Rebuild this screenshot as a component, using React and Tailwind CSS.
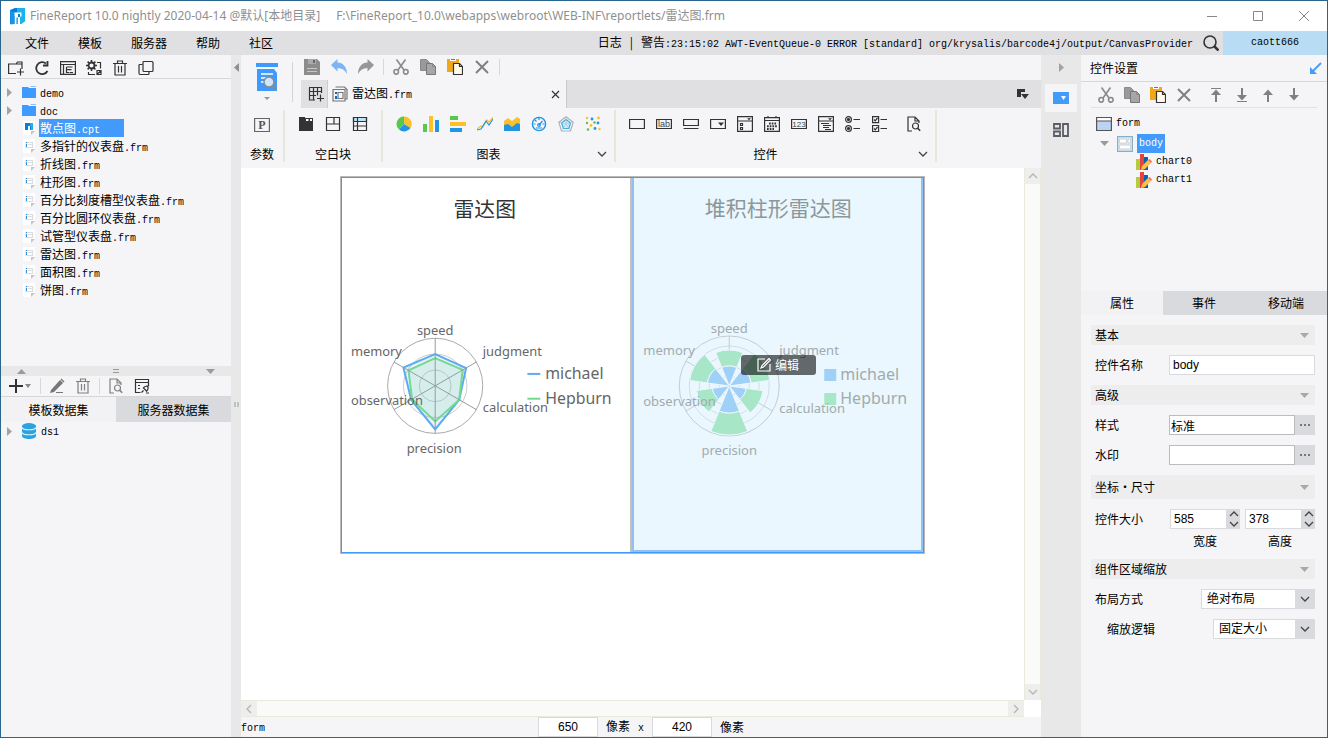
import React, { useState } from "react";

const MONO = "font-[family-name:'Liberation_Mono','Noto_Sans_CJK_SC',monospace] text-[10px]";

const Svg = ({ size = 16, box = 16, children, ...rest }) => (
  <svg
    width={size}
    height={size}
    viewBox={`0 0 ${box} ${box}`}
    fill="none"
    stroke="#333"
    strokeWidth="1.2"
    className="shrink-0"
    aria-hidden="true"
    {...rest}
  >
    {children}
  </svg>
);

const Down = ({ color = "#9a9a9a" }) => (
  <svg width="9" height="5" viewBox="0 0 9 5" className="shrink-0" aria-hidden="true">
    <path d="M0 0h9L4.5 5z" fill={color} />
  </svg>
);

const Up = () => (
  <svg width="9" height="5" viewBox="0 0 9 5" aria-hidden="true">
    <path d="M0 5h9L4.5 0z" fill="#9a9a9a" />
  </svg>
);

const Right = () => (
  <svg width="5" height="9" viewBox="0 0 5 9" className="shrink-0" aria-hidden="true">
    <path d="M0 0v9l5-4.5z" fill="#a2a2a2" />
  </svg>
);

const Left = () => (
  <svg width="5" height="9" viewBox="0 0 5 9" aria-hidden="true">
    <path d="M5 0v9L0 4.5z" fill="#8f8f8f" />
  </svg>
);

const Chevron = ({ dir = "down", color = "#444" }) => {
  const paths = {
    down: "M1 3l4 4 4-4",
    up: "M1 7l4-4 4 4",
    left: "M7 1L3 5l4 4",
    right: "M3 1l4 4-4 4",
  };
  return (
    <svg width="10" height="10" viewBox="0 0 10 10" fill="none" stroke={color} strokeWidth="1.3" aria-hidden="true">
      <path d={paths[dir]} />
    </svg>
  );
};

const Logo = () => (
  <Svg size={17} box={17} stroke="none">
    <path d="M1 2l5-2h10v13l-4 3H1z" fill="#0a7ed6" />
    <path d="M8 0h8v13l-4 3H8z" fill="#18b4ea" />
    <path d="M4.500 4.500h8v4h-1.500v7.500H9V9.500H7.500V16H5.500V8l-1-1z" fill="#fff" />
    <path d="M9 6h2v3H9z" fill="#0a7ed6" />
    <path d="M1 2l4.500 2.500V16l-4 .5z" fill="#1296ea" />
  </Svg>
);

const Cut = () => (
  <Svg stroke="#8a8a8a" strokeWidth="1.6">
    <path d="M3.5 0.5L11 11M12.5 0.5L5 11" />
    <circle cx="3.2" cy="12.8" r="2.3" />
    <circle cx="12.8" cy="12.8" r="2.3" />
  </Svg>
);

const Copy = () => (
  <Svg stroke="#8a8a8a" strokeWidth="1">
    <path d="M.5.5h6l3 3v8h-9z" fill="#999" />
    <path d="M6.500 4.500h6l3 3v8h-9z" fill="#a6a6a6" stroke="#777" />
    <path d="M12.500 4.500v3h3" />
  </Svg>
);

const Paste = () => (
  <Svg stroke="none">
    <path d="M0 0h12v13H0z" fill="#f0a818" />
    <path d="M3 0h6v2H3z" fill="#fff" />
    <path d="M4 0h4v1H4z" fill="#c55a1e" />
    <path d="M6.500 4.500h6l3 3v8h-9z" fill="#fffbe8" stroke="#333" />
    <path d="M12.500 4.500v3h3" fill="none" stroke="#333" />
  </Svg>
);

const Cross = () => (
  <Svg stroke="#808080" strokeWidth="2">
    <path d="M2 2l12 12M14 2L2 14" />
  </Svg>
);

const Save = () => (
  <Svg stroke="none">
    <path d="M0 0h13l3 3v13H0z" fill="#8c8c8c" />
    <path d="M4 0h8v5H4z" fill="#aaa" />
    <path d="M9 1h2v3H9z" fill="#666" />
    <path d="M3 9h10v1H3zM3 12h10v1H3z" fill="#c8c8c8" />
  </Svg>
);

const Undo = () => (
  <Svg stroke="none">
    <path d="M0 6l6.500-6v3.500C12 3.500 16 8 16 15c-2-4-5-6-9.500-6v3.500z" fill="#7cb5f2" />
  </Svg>
);

const Redo = () => (
  <Svg stroke="none">
    <path d="M16 6L9.500 0v3.500C4 3.500 0 8 0 15c2-4 5-6 9.500-6v3.500z" fill="#979797" />
  </Svg>
);

const Trash = ({ color = "#333" }) => (
  <Svg stroke={color}>
    <path d="M1 3.500h14M5.500 3V1h5v2M3 3.500V15h10V3.500M6.500 6v6.500M9.500 6v6.500" />
  </Svg>
);

const Find = ({ color = "#333" }) => (
  <Svg stroke={color}>
    <path d="M6 15H2V1h7l4 4v2M9 1v4h4" />
    <circle cx="9.500" cy="10" r="3" />
    <path d="M11.700 12.200l2.500 2.500" strokeWidth="1.600" />
  </Svg>
);

const Folder = () => (
  <Svg size={14} box={14} stroke="none">
    <path d="M0 2h6l1 1h7v10H0z" fill="#3f9aff" />
    <path d="M8 1h6v1H9z" fill="#8cc3ff" />
  </Svg>
);

const FrmIcon = () => (
  <Svg size={14} box={14} stroke="none">
    <path d="M1 0h12v10l-4 4H1z" fill="#fff" />
    <path d="M13 10l-4 4v-4z" fill="#c4c4c4" />
    <path d="M4 3.500h6.500v5H4zM6 5.500h4" stroke="#dcdcdc" />
    <path d="M4 3h1v1H4zM4 5h1v3H4z" fill="#2d8fd6" />
  </Svg>
);

const CptIcon = () => (
  <Svg size={14} box={14} stroke="none">
    <path d="M1 0h12v10l-4 4H1z" fill="#fff" />
    <path d="M13 10l-4 4v-4z" fill="#c4c4c4" />
    <path d="M3 2h8v7H8V5H6v4H3z" fill="#0a7ed6" />
    <path d="M8 2h3v7H9V5H8z" fill="#18b4ea" />
  </Svg>
);

const Database = () => (
  <Svg stroke="none">
    <path d="M1 3v10c0 4 14 4 14 0V3z" fill="#2ba3e0" />
    <ellipse cx="8" cy="3" rx="7" ry="3" fill="#2ba3e0" />
    <path d="M1 4.500c1 3 13 3 14 0M1 9.500c1 3 13 3 14 0" fill="none" stroke="#d8effb" />
  </Svg>
);

const ChartItemIcon = () => (
  <Svg stroke="none">
    <path d="M0 5h4v11H0z" fill="#b4cc3f" />
    <path d="M4 0h4v16H4z" fill="#e8423c" />
    <path d="M8 3h4v13H8z" fill="#0b62a8" />
    <path d="M5 16l1-4 6-6 3 3-6 6z" fill="#fbc04c" />
    <path d="M12 6l1.500-1L16 7.500 15 9z" fill="#f07050" />
  </Svg>
);

const Bar = ({ beige }) => <span className={`h-4 w-px shrink-0 ${beige ? "bg-[#e4dfd0]" : "bg-[#d8d8da]"}`} />;

const IconButton = ({ label, children }) => (
  <button type="button" aria-label={label} className="flex h-5 w-4 shrink-0 items-center justify-center">
    {children}
  </button>
);

const fileTools = [
  {
    name: "新建文件夹",
    icon: (
      <Svg>
        <path d="M8 13.500H.6V4H8l1.500-2H14v7M8 4h6M12.500 8.500v7M9 12h7" />
      </Svg>
    ),
  },
  {
    name: "刷新",
    icon: (
      <Svg strokeWidth="1.800">
        <path d="M13.500 11A6 6 0 1 1 12 3.500" />
        <path d="M9 5.500h4.500V1" />
      </Svg>
    ),
  },
  {
    name: "打开",
    icon: (
      <Svg>
        <path d="M.6 1.600h14.800v12.800H.6zM.6 4.500h14.800M3.500 4.500v10M6.500 7h6M6.500 7v5.500h3M6.500 9.700h5M10 12.500h3" />
      </Svg>
    ),
  },
  {
    name: "设置",
    icon: (
      <Svg>
        <circle cx="5.500" cy="5.500" r="3" strokeWidth="1.800" />
        <path d="M5.500 0v2M5.500 9v2M0 5.500h2M9 5.500h2M1.600 1.600L3 3M8 8l1.400 1.400M1.600 9.400L3 8M8 3l1.400-1.400" strokeWidth="1.600" />
        <path d="M11 2.500h3.500v6M2.500 12v2.500H9M11 10.500h4v4h-4zM11 14.500l4-4" />
      </Svg>
    ),
  },
  { name: "删除", icon: <Trash /> },
  {
    name: "复制",
    icon: (
      <Svg>
        <rect x="5" y="1.500" width="10" height="10" rx="1" />
        <path d="M4.500 4.500H2q-1 0-1 1V13q0 1.500 1 1.500h8q1 0 1-1V12" />
      </Svg>
    ),
  },
];

const files = [
  ["demo", "", "folder"],
  ["doc", "", "folder"],
  ["散点图", ".cpt", "cpt"],
  ["多指针的仪表盘", ".frm", "frm"],
  ["折线图", ".frm", "frm"],
  ["柱形图", ".frm", "frm"],
  ["百分比刻度槽型仪表盘", ".frm", "frm"],
  ["百分比圆环仪表盘", ".frm", "frm"],
  ["试管型仪表盘", ".frm", "frm"],
  ["雷达图", ".frm", "frm"],
  ["面积图", ".frm", "frm"],
  ["饼图", ".frm", "frm"],
];

const blockIcons = [
  {
    name: "Tab块",
    icon: (
      <Svg stroke="none">
        <path d="M1 1h6v1h8v13H1z" fill="#333" />
        <path d="M7.500 2.500H11v3H7.500zM11.500 2.500h3v3h-3z" fill="#fff" stroke="#333" strokeWidth="1" />
      </Svg>
    ),
  },
  {
    name: "绝对画布块",
    icon: (
      <Svg>
        <path d="M1.500 1.500h13v13h-13zM1.500 8h13M9 1.500V8" />
      </Svg>
    ),
  },
  {
    name: "报表块",
    icon: (
      <Svg>
        <path d="M1.500 1.500h13v4h-13z" fill="#bfe6f7" />
        <path d="M1.500 1.500h13v13h-13zM1.500 5.500h13M1.500 10h13M5.500 1.500v13" />
      </Svg>
    ),
  },
];

const chartIcons = [
  {
    name: "饼图",
    icon: (
      <Svg stroke="none">
        <path d="M8 8V.5A7.500 7.500 0 0 1 14.500 12z" fill="#fbc02d" />
        <path d="M8 8l6.500 4A7.500 7.500 0 0 1 3 13.500z" fill="#1f95e4" />
        <path d="M8 8l-5 5.500A7.500 7.500 0 0 1 8 .5z" fill="#56c84e" />
      </Svg>
    ),
  },
  {
    name: "柱形图",
    icon: (
      <Svg stroke="none">
        <path d="M0 8h4v8H0z" fill="#56c84e" />
        <path d="M6 0h4v16H6z" fill="#fbc02d" />
        <path d="M12 4h4v12h-4z" fill="#1f95e4" />
      </Svg>
    ),
  },
  {
    name: "条形图",
    icon: (
      <Svg stroke="none">
        <path d="M0 0h8v4H0z" fill="#56c84e" />
        <path d="M0 6h16v4H0z" fill="#fbc02d" />
        <path d="M0 12h12v4H0z" fill="#1f95e4" />
      </Svg>
    ),
  },
  {
    name: "折线图",
    icon: (
      <Svg>
        <path d="M0 13l4-3 2 1 4-7 2 2 4-5" stroke="#fbc02d" />
        <path d="M0 14l4-1 5-8 3 4 4-6" stroke="#1f95e4" />
      </Svg>
    ),
  },
  {
    name: "面积图",
    icon: (
      <Svg stroke="none">
        <path d="M0 5l4-3 4 3 5-4 3 2v9H0z" fill="#fbc02d" />
        <path d="M0 9l4-1 4 3 5-4 3 1v7H0z" fill="#1f95e4" />
      </Svg>
    ),
  },
  {
    name: "仪表盘",
    icon: (
      <Svg stroke="#1f95e4">
        <circle cx="8" cy="8" r="6.600" strokeWidth="1.400" />
        <path d="M8 9l3.500-4M8 2v2M2.500 8h2M11.500 8h2M4 4l1.500 1.500M5 12h6" />
        <circle cx="8" cy="9" r="1.300" />
      </Svg>
    ),
  },
  {
    name: "雷达图",
    icon: (
      <Svg stroke="#a9b4bb">
        <path d="M8 .8l7.200 5.400-2.700 8.800H3.500L.8 6.200z" />
        <path d="M8 3.500l4.500 3.500-1.600 5.500H5.500L3.500 7z" fill="#c9ecfb" stroke="#37aee6" />
        <path d="M8 8V1M8 8l7-2M8 8l4 6M8 8l-4 6M8 8L1 6" strokeWidth=".5" />
      </Svg>
    ),
  },
  {
    name: "散点图",
    icon: (
      <Svg stroke="none">
        <g fill="#1f95e4">
          <circle cx="7" cy="3" r="1.400" />
          <circle cx="13" cy="7" r="1.400" />
          <circle cx="10" cy="12.500" r="1.400" />
        </g>
        <g fill="#fbc02d">
          <circle cx="2" cy="2" r="1.300" />
          <circle cx="13.500" cy="2" r="1.400" />
          <circle cx="6" cy="9.500" r="1.400" />
          <circle cx="14.500" cy="13" r="1.200" />
        </g>
        <g fill="#56c84e">
          <circle cx="9.500" cy="6.500" r="1.300" />
          <circle cx="2" cy="7" r="1.200" />
          <circle cx="3" cy="13.500" r="1.300" />
        </g>
      </Svg>
    ),
  },
];

const svgWord = { fill: "#444", stroke: "none", fontSize: 9, textAnchor: "middle", fontFamily: "Liberation Sans, sans-serif" };

const widgetIcons = [
  { name: "文本", icon: <Svg><path d="M.6 3.500h14.800v9H.6z" /></Svg> },
  {
    name: "标签",
    icon: (
      <Svg>
        <path d="M.6 3.500h14.800v9H.6z" />
        <text x="8" y="11" {...svgWord}>lab</text>
      </Svg>
    ),
  },
  { name: "按钮", icon: <Svg><path d="M.6 3.500h14.800v6H.6zM.6 12.500h14.800" /></Svg> },
  {
    name: "下拉框",
    icon: (
      <Svg>
        <path d="M.6 3.500h14.800v9H.6z" />
        <path d="M8 6.500h6L11 10z" fill="#333" stroke="none" />
      </Svg>
    ),
  },
  {
    name: "下拉复选框",
    icon: (
      <Svg>
        <path d="M.6.6h14.800v14.800H.6zM.6 5h14.800M3.500 7.500h2v2h-2zM3.500 11.500h2v2h-2z" />
        <path d="M10 2.200h4l-2 2z" fill="#333" stroke="none" />
      </Svg>
    ),
  },
  {
    name: "日期",
    icon: (
      <Svg>
        <path d="M.6 1.600h14.800v13.800H.6zM.6 4.500h14.800M4 0v2M12 0v2" />
        <path d="M5 7.500h8M3 10.300h10M3 13h7" strokeWidth="2" strokeDasharray="1.700 1" />
      </Svg>
    ),
  },
  {
    name: "数字",
    icon: (
      <Svg>
        <path d="M.6 3.500h14.800v9H.6z" />
        <text x="8" y="11" {...svgWord} fontSize={8}>123</text>
      </Svg>
    ),
  },
  {
    name: "下拉树",
    icon: (
      <Svg>
        <path d="M.6.6h14.800v14.800H.6zM.6 5h14.800M3 7.500h8M5 9.500h8M5 11.500h6M7 13.500h6" />
        <path d="M10 2.200h4l-2 2z" fill="#333" stroke="none" />
      </Svg>
    ),
  },
  {
    name: "单选按钮组",
    icon: (
      <Svg>
        <circle cx="3.500" cy="3.500" r="2.900" />
        <circle cx="3.500" cy="12.500" r="2.900" />
        <circle cx="3.500" cy="3.500" r="1" fill="#333" />
        <circle cx="3.500" cy="12.500" r="1" fill="#333" />
        <path d="M8.500 3.500H15M8.500 12.500H15" />
      </Svg>
    ),
  },
  {
    name: "复选按钮组",
    icon: (
      <Svg>
        <path d="M.6.6h6v6h-6zM.6 9.500h6v6h-6zM2 3.500l1.200 1.300L5.500 2M2 12.500l1.200 1.300L5.500 11M8.500 3.500H15M8.500 12.500H15" />
      </Svg>
    ),
  },
];

// point on a circle, angle measured clockwise from the top
const polar = (cx, cy, r, deg) => {
  const a = (deg * Math.PI) / 180;
  return [cx + r * Math.sin(a), cy - r * Math.cos(a)];
};

const Spokes = ({ cx, cy, r, color }) =>
  [0, 60, 120, 180, 240, 300].map((deg) => {
    const [x, y] = polar(cx, cy, r, deg);
    return <path key={deg} d={`M${cx} ${cy}L${x} ${y}`} stroke={color} />;
  });

const series = [
  { name: "michael", color: "#5cabf0", values: [32, 36, 28, 44, 28, 37] },
  { name: "Hepburn", color: "#73d98f", values: [28, 32, 28, 36, 27, 31] },
];

const CHART_FONT = "font-[family-name:'Noto_Sans','Noto_Sans_CJK_SC',sans-serif]";

function RadarChart() {
  const cx = 94;
  const cy = 208;
  return (
    <svg viewBox="0 0 290 374" className={`h-full w-full ${CHART_FONT}`} fill="none" role="img" aria-label="雷达图">
      <text x="144" y="38" fontSize="21" textAnchor="middle" fill="#333">雷达图</text>
      {[16, 32, 48].map((r) => (
        <circle key={r} cx={cx} cy={cy} r={r} stroke={r === 48 ? "#a8a8a8" : "#cacaca"} />
      ))}
      {series.map((s) => (
        <polygon
          key={s.name}
          points={s.values.map((v, i) => polar(cx, cy, v, i * 60).join(",")).join(" ")}
          fill={s.color}
          fillOpacity=".15"
          stroke={s.color}
          strokeWidth="2"
        />
      ))}
      <Spokes cx={cx} cy={cy} r={48} color="#8f9d9c" />
      <g fill="#666" fontSize="13">
        <text x="94" y="157" textAnchor="middle">speed</text>
        <text x="9" y="178">memory</text>
        <text x="142" y="178">judgment</text>
        <text x="9" y="227">observation</text>
        <text x="142" y="234">calculation</text>
        <text x="93" y="276" textAnchor="middle">precision</text>
      </g>
      <path d="M187 196h13" stroke="#5cabf0" strokeWidth="2" />
      <path d="M187 221h13" stroke="#73d98f" strokeWidth="2" />
      <g fill="#666" fontSize="16">
        <text x="205" y="201">michael</text>
        <text x="205" y="226">Hepburn</text>
      </g>
    </svg>
  );
}

const wedges = [
  [20, 36],
  [22, 41],
  [17, 34],
  [27, 49],
  [17, 33],
  [22, 40],
];

function StackedRadarChart() {
  const cx = 95;
  const cy = 208;
  const wedge = (r1, r2, deg) => {
    const a = polar(cx, cy, r1, deg - 22);
    const b = polar(cx, cy, r2, deg - 22);
    const c = polar(cx, cy, r2, deg + 22);
    const d = polar(cx, cy, r1, deg + 22);
    return `M${a}L${b}A${r2} ${r2} 0 0 1 ${c}L${d}A${r1} ${r1} 0 0 0 ${a}z`;
  };
  return (
    <svg viewBox="0 0 287 372" className={`h-full w-full ${CHART_FONT}`} fill="none" role="img" aria-label="堆积柱形雷达图">
      <text x="144" y="38" fontSize="21" textAnchor="middle" fill="#8c979b">堆积柱形雷达图</text>
      {[10, 20, 30, 40, 50].map((r) => (
        <circle key={r} cx={cx} cy={cy} r={r} stroke={r === 50 ? "#c3cdd2" : "#d3dee3"} />
      ))}
      <Spokes cx={cx} cy={cy} r={50} color="#c3cdd2" />
      {wedges.map(([inner, outer], i) => (
        <g key={i} stroke="#ebf7fe">
          <path d={wedge(inner, outer, i * 60)} fill="#a8e6c8" />
          <path d={wedge(1, inner, i * 60)} fill="#9fd0f7" />
        </g>
      ))}
      <path d="M190 191h12v12h-12z" fill="#9fd0f7" />
      <path d="M190 215h12v12h-12z" fill="#a8e6c8" />
      <g fill="#a0abaf" fontSize="13">
        <text x="95" y="155" textAnchor="middle">speed</text>
        <text x="9" y="177">memory</text>
        <text x="145" y="177">judgment</text>
        <text x="9" y="228">observation</text>
        <text x="145" y="235">calculation</text>
        <text x="95" y="277" textAnchor="middle">precision</text>
      </g>
      <g fill="#a0abaf" fontSize="16">
        <text x="206" y="202">michael</text>
        <text x="206" y="226">Hepburn</text>
      </g>
    </svg>
  );
}

function TitleBar() {
  return (
    <header className="flex h-[30px] shrink-0 items-center bg-white pr-1 pl-2 text-[12px] text-[#8f8f8f] font-[family-name:'Noto_Sans','Noto_Sans_CJK_SC',sans-serif]">
      <Logo />
      <h1 className="ml-1 whitespace-pre">FineReport 10.0 nightly 2020-04-14 @默认[本地目录]</h1>
      <span className="ml-4 whitespace-pre">F:\FineReport_10.0\webapps\webroot\WEB-INF\reportlets/雷达图.frm</span>
      <div className="ml-auto flex items-center gap-9 pr-[14px]">
        <button type="button" aria-label="最小化">
          <Svg size={10} box={10} stroke="#888" strokeWidth="1"><path d="M0 5.500h10" /></Svg>
        </button>
        <button type="button" aria-label="最大化">
          <Svg size={10} box={10} stroke="#888" strokeWidth="1"><path d="M.5.5h9v9h-9z" /></Svg>
        </button>
        <button type="button" aria-label="关闭">
          <Svg size={10} box={10} stroke="#888" strokeWidth="1"><path d="M0 0l10 10M10 0L0 10" /></Svg>
        </button>
      </div>
    </header>
  );
}

function MenuBar() {
  return (
    <nav className="flex h-6 shrink-0 items-center bg-[#e0e0e2]">
      <div className="flex gap-[29px] pl-6">
        {["文件", "模板", "服务器", "帮助", "社区"].map((item) => (
          <button type="button" key={item}>{item}</button>
        ))}
      </div>
      <div className="ml-auto flex items-baseline whitespace-pre">
        <button type="button">日志</button>
        <span className="mx-2">|</span>
        <span>警告</span>
        <span className={MONO}>:23:15:02 AWT-EventQueue-0 ERROR [standard] org/krysalis/barcode4j/output/CanvasProvider</span>
      </div>
      <button type="button" aria-label="搜索" className="mr-1 ml-[10px]">
        <Svg strokeWidth="1.600">
          <circle cx="7" cy="7" r="6" />
          <path d="M11 11l4.500 4.500" strokeWidth="2.500" />
        </Svg>
      </button>
      <button type="button" className={`h-6 w-[104px] bg-[#b8dcf3] ${MONO}`}>caott666</button>
    </nav>
  );
}

function FilePanel() {
  const [selected, setSelected] = useState("散点图");
  return (
    <aside className="flex w-[230px] shrink-0 flex-col">
      <div className="flex h-6 shrink-0 items-center gap-[10px] border-b border-[#d6d6d8] pt-[3px] pl-[7px]">
        {fileTools.map((tool) => (
          <IconButton key={tool.name} label={tool.name}>{tool.icon}</IconButton>
        ))}
      </div>
      <ul className="flex-1 overflow-hidden pt-1">
        {files.map(([base, ext, type]) => (
          <li key={base} className="flex h-[18px] items-center pl-[6px]">
            <span className="w-[15px]">{type === "folder" && <Right />}</span>
            {type === "folder" ? <Folder /> : type === "cpt" ? <CptIcon /> : <FrmIcon />}
            <button
              type="button"
              onClick={() => setSelected(base)}
              className={`ml-[3px] h-[18px] pl-px leading-[18px] ${
                selected === base ? "bg-[#429bfb] pr-6 text-white" : ""
              }`}
            >
              <span className={type === "folder" ? MONO : ""}>{base}</span>
              <span className={MONO}>{ext}</span>
            </button>
          </li>
        ))}
      </ul>

      <div className="flex h-[10px] shrink-0 items-center justify-between bg-[#e8e8e8] px-4">
        <Up />
        <Svg size={6} box={6} stroke="#999" strokeWidth="1"><path d="M0 1.500h6M0 4.500h6" /></Svg>
        <Down />
      </div>
      <div className="flex h-[21px] shrink-0 items-center border-b border-[#d6d6d8] pl-2">
        <button type="button" aria-label="添加" className="flex items-center gap-[2px]">
          <Svg size={14} box={14} strokeWidth="2"><path d="M0 7h14M7 0v14" /></Svg>
          <svg width="6" height="4" viewBox="0 0 6 4" aria-hidden="true"><path d="M0 0h6L3 4z" fill="#888" /></svg>
        </button>
        <span className="mr-2 ml-[9px] flex"><Bar /></span>
        <IconButton label="编辑">
          <Svg stroke="none">
            <path d="M2 12L11 2l3 3L5 14l-4 1z" fill="#777" />
            <path d="M11.500 1.500l1-1 3 3-1 1zM7 14h7v1H7z" fill="#777" />
          </Svg>
        </IconButton>
        <button type="button" aria-label="删除" className="mr-2 ml-[10px]"><Trash color="#808080" /></button>
        <Bar />
        <button type="button" aria-label="预览" className="mr-[10px] ml-2"><Find color="#808080" /></button>
        <IconButton label="连接">
          <Svg>
            <path d="M6.500 14.500h-5v-13h13V7M1.500 4.500h13M4 7.500h2M4 10.500h2" />
            <path d="M7.500 14.500l2-2M13 9l2-2M9 9.500l4 4M9.500 10.500c1-3 4-2.500 4.500-1.500s-.5 4-2 4.500M12 15h3" />
          </Svg>
        </IconButton>
      </div>
      <div className="flex h-[25px] shrink-0">
        <button type="button" className="flex-1 bg-[#f2f2f4]">模板数据集</button>
        <button type="button" className="flex-1 bg-[#d9dade]">服务器数据集</button>
      </div>
      <ul className="h-[315px] shrink-0">
        <li className="flex h-[18px] items-center pl-[6px]">
          <span className="w-[14px]"><Right /></span>
          <Database />
          <span className="ml-1 leading-[18px]">
            <span className={MONO}>ds1</span>
          </span>
        </li>
      </ul>
    </aside>
  );
}

function EditTools() {
  return (
    <div className="flex h-[25px] shrink-0 items-start gap-[11px] pt-[2px] pl-[3px]">
      <IconButton label="保存"><Save /></IconButton>
      <IconButton label="撤销"><Undo /></IconButton>
      <IconButton label="重做"><Redo /></IconButton>
      <span className="-mx-[2px] pt-[2px]"><span className="block h-4 w-px bg-[#d8d8da]" /></span>
      <IconButton label="剪切"><Cut /></IconButton>
      <IconButton label="复制"><Copy /></IconButton>
      <IconButton label="粘贴"><Paste /></IconButton>
      <IconButton label="删除"><Cross /></IconButton>
      <span className="-mx-[2px] pt-[2px]"><span className="block h-4 w-px bg-[#d8d8da]" /></span>
    </div>
  );
}

function Tabs() {
  return (
    <div className="flex h-7 shrink-0 items-center bg-[#e0e0e2]">
      <button type="button" aria-label="新建" className="flex h-7 w-[27px] items-center justify-center border-r border-[#cdcdcf] pl-1">
        <Svg><path d="M1 1.500h13M1.500 1.500V14H7M1 5.500h13M1 9.500h7M5.500 1.500V14M9.500 1.500v8M13.500 1.500V7M12.500 8.500v7M9 12.500h7" /></Svg>
      </button>
      <div className="flex h-7 w-[239px] items-center border-r border-[#c8c8ca] bg-[#f5f5f7] pr-[6px] pl-1">
        <Svg stroke="#777">
          <path d="M3.500 1h9L15 3.500V13h-2" />
          <path d="M1 3.500h12V15H1zM6 6.500h5v6H6z" />
          <path d="M3 6h2v2H3zM3 10h2v3H3z" fill="#0a6cc4" stroke="none" />
        </Svg>
        <span className="ml-1">
          雷达图<span className={MONO}>.frm</span>
        </span>
        <button type="button" aria-label="关闭标签" className="ml-auto">
          <Svg size={9} box={9}><path d="M1 1l7 7M8 1L1 8" /></Svg>
        </button>
      </div>
      <button type="button" aria-label="标签列表" className="mr-3 ml-auto">
        <Svg size={12} box={12} stroke="none">
          <path d="M0 1h8v3H4v5H0z" fill="#333" />
          <path d="M4 6h8l-4 5z" fill="#333" />
        </Svg>
      </button>
    </div>
  );
}

const Group = ({ items, label, width, more }) => (
  <section className={`flex flex-col border-r-2 border-[#e8e6dc] ${width}`}>
    <div className="flex h-7 items-center justify-center gap-[11px]">
      {items.map((item) => (
        <IconButton key={item.name} label={item.name}>{item.icon}</IconButton>
      ))}
      {more === "find" && (
        <>
          <span className="-mx-[2px]"><Bar beige /></span>
          <IconButton label="查询"><Find /></IconButton>
        </>
      )}
    </div>
    <div className="flex h-6 items-center pt-2">
      <span className="flex-1 text-center">{label}</span>
      {more && (
        <button type="button" aria-label={`更多${label}`} className="w-5 pl-[3px]">
          <Chevron />
        </button>
      )}
    </div>
  </section>
);

const paramIcons = [
  {
    name: "参数面板",
    icon: (
      <Svg stroke="#666">
        <path d="M.6 2.500h14.800v13H.6z" />
        <text x="8" y="13" fontSize="12" fontWeight="700" textAnchor="middle" fill="#555" stroke="none" fontFamily="Liberation Serif, serif">P</text>
      </Svg>
    ),
  },
];

function Ribbon() {
  return (
    <div className="flex h-[60px] shrink-0 pt-[2px] pb-[6px]">
      <Group items={paramIcons} label="参数" width="w-11" />
      <Group items={blockIcons} label="空白块" width="w-[98px]" />
      <Group items={chartIcons} label="图表" width="w-[233px]" more="list" />
      <Group items={widgetIcons} label="控件" width="w-[321px]" more="find" />
    </div>
  );
}

function Designer() {
  return (
    <div className="flex min-h-0 flex-1 bg-white">
      <div className="flex min-w-0 flex-1 flex-col">
        <div className="min-h-0 flex-1 overflow-hidden pt-[9px] pl-[100px]">
          <div className="flex h-[376px] w-[583px] border border-[#429bfb] outline outline-[#bcb8b6]">
            <div className="flex-1 border-r-2 border-[#c4bfbd]">
              <RadarChart />
            </div>
            <div className="relative flex-1 border-x-2 border-b-2 border-[#8fc0f8] bg-[#ebf7fe]">
              <StackedRadarChart />
              <button
                type="button"
                className="absolute top-[177px] left-[107px] flex h-5 w-[75px] items-center justify-center gap-1 rounded-[3px] bg-[#000000]/58 text-white"
              >
                <Svg size={14} box={14} stroke="#fff">
                  <path d="M8 1H1v12h12V6M4 10l1-2.500 7-7L13.500 2l-7 7z" />
                </Svg>
                编辑
              </button>
            </div>
          </div>
        </div>
        <div className="flex h-[17px] shrink-0 items-center border-y border-[#ece9dc] bg-[#fafaf9]">
          <button type="button" aria-label="向左滚动" className="flex h-full w-4 items-center justify-center bg-[#eeeeec]">
            <Chevron dir="left" color="#b5b5b5" />
          </button>
          <button type="button" aria-label="向右滚动" className="ml-auto flex h-full w-4 items-center justify-center bg-[#eeeeec]">
            <Chevron dir="right" color="#b5b5b5" />
          </button>
        </div>
      </div>
      <div className="mb-[17px] flex w-[17px] shrink-0 flex-col border-x border-[#ece9dc] bg-[#fafaf9]">
        <button type="button" aria-label="向上滚动" className="flex h-4 items-center justify-center bg-[#eeeeec]">
          <Chevron dir="up" color="#b5b5b5" />
        </button>
        <button type="button" aria-label="向下滚动" className="mt-auto flex h-4 items-center justify-center bg-[#eeeeec]">
          <Chevron color="#b5b5b5" />
        </button>
      </div>
    </div>
  );
}

const field = "h-5 min-w-0 border border-[#d9dade] bg-white font-[family-name:'Liberation_Sans','Noto_Sans_CJK_SC',sans-serif] text-[12px] outline-none";

function StatusBar() {
  return (
    <footer className="flex h-5 shrink-0 items-center">
      <span className="w-[297px]">
        <span className={MONO}>form</span>
      </span>
      <input aria-label="宽" defaultValue="650" className={`${field} w-[60px] text-center`} />
      <span className="ml-2">
        像素<span className={`mx-2 ${MONO}`}>x</span>
      </span>
      <input aria-label="高" defaultValue="420" className={`${field} w-[60px] text-center`} />
      <span className="ml-2">像素</span>
    </footer>
  );
}

function Center() {
  return (
    <main className="flex min-w-0 flex-1 flex-col">
      <div className="flex shrink-0">
        <div className="flex w-[60px] items-center py-[6px]">
          <button type="button" aria-label="预览" className="flex w-[51px] flex-col items-center gap-[6px]">
            <svg width="22" height="28" viewBox="0 0 22 28" aria-hidden="true">
              <path d="M0 0h22v4H0zM1 6h17l3 4v18H1z" fill="#3f9aff" />
              <path d="M5 11h12M5 15h6M5 19h3" stroke="#fff" strokeWidth="1.500" />
              <circle cx="13" cy="19" r="5" fill="#cfe6fb" stroke="#8a8a8a" strokeWidth="1.400" />
              <path d="M16.500 22.500l4 4" stroke="#8a8a8a" strokeWidth="2.200" />
            </svg>
            <svg width="6" height="3" viewBox="0 0 6 3" aria-hidden="true"><path d="M0 0h6L3 3z" fill="#999" /></svg>
          </button>
          <span className="h-10 w-px bg-[#d4d4d6]" />
        </div>
        <div className="min-w-0 flex-1">
          <EditTools />
          <Tabs />
        </div>
      </div>
      <Ribbon />
      <Designer />
      <StatusBar />
    </main>
  );
}

const Arrow = ({ flip, bar }) => (
  <Svg stroke="#808080" strokeWidth="2" className={flip ? "shrink-0 rotate-180" : "shrink-0"}>
    <path d="M8 15V5" />
    <path d="M3 8l5-5.500L13 8z" fill="#808080" stroke="none" />
    {bar && <path d="M3 1.500h10" strokeWidth="1" />}
  </Svg>
);

const Section = ({ title, tall }) => (
  <button
    type="button"
    className={`flex w-full items-center justify-between bg-[#ededed] pr-[6px] pl-1 ${tall ? "h-6" : "h-5"}`}
  >
    {title}
    <Down color="#a8a8a8" />
  </button>
);

const Spinner = ({ label, value }) => (
  <label className="flex w-[70px] flex-col items-center">
    <span className="flex w-full">
      <input defaultValue={value} className={`${field} w-[57px] pl-[3px]`} />
      <span className="flex h-5 w-[13px] flex-col items-center bg-[#d9dade]">
        <Chevron dir="up" />
        <Chevron />
      </span>
    </span>
    <span className="h-5 pt-1">{label}</span>
  </label>
);

const Pick = ({ id, width, value }) => (
  <span className={`relative ${width}`}>
    <select id={id} className={`${field} w-full appearance-none pl-[5px]`}>
      <option>{value}</option>
    </select>
    <span className="pointer-events-none absolute top-0 right-0 flex h-5 w-5 items-center justify-center bg-[#d9dade]">
      <Chevron />
    </span>
  </span>
);

const DotField = ({ id, value }) => (
  <span className="flex w-[146px]">
    <input id={id} defaultValue={value} className="h-5 min-w-0 flex-1 border border-[#bcbcbc] bg-white pl-px outline-none" />
    <button type="button" aria-label="选择" className="flex h-5 w-5 items-center justify-center bg-[#d9dade]">
      <svg width="11" height="2" viewBox="0 0 11 2" fill="#777" aria-hidden="true">
        <path d="M0 0h2v2H0zM4 0h2v2H4zM8 0h2v2H8z" />
      </svg>
    </button>
  </span>
);

function PropertyPanel() {
  const [tab, setTab] = useState("属性");
  return (
    <aside className="flex w-[246px] shrink-0 flex-col">
      <div className="flex h-[27px] shrink-0 items-center justify-between border-b border-[#d6d6d8] pr-[5px] pl-[9px]">
        <h2>控件设置</h2>
        <button type="button" aria-label="停靠">
          <Svg size={12} box={12} stroke="#429bfb" strokeWidth="1.800">
            <path d="M11 1L3 9" />
            <path d="M0 5v7h7z" fill="#429bfb" stroke="none" />
          </Svg>
        </button>
      </div>
      <div className="mr-[10px] ml-[10px] flex h-[26px] shrink-0 items-center gap-[10px] border-b border-[#e2e2e4] pl-[7px]">
        <IconButton label="剪切"><Cut /></IconButton>
        <IconButton label="复制"><Copy /></IconButton>
        <IconButton label="粘贴"><Paste /></IconButton>
        <IconButton label="删除"><Cross /></IconButton>
        <span className="-mx-[2px]"><Bar /></span>
        <IconButton label="置于顶层"><Arrow bar /></IconButton>
        <IconButton label="置于底层"><Arrow bar flip /></IconButton>
        <IconButton label="上移一层"><Arrow /></IconButton>
        <IconButton label="下移一层"><Arrow flip /></IconButton>
      </div>
      <ul className={`h-[183px] shrink-0 pt-[6px] ${MONO}`}>
        <li className="flex h-5 items-center gap-1 pl-[15px]">
          <Svg stroke="#555">
            <path d="M.6 1.500h14.800v13H.6z" fill="#bcd3f4" />
            <path d="M.6 1.500h14.800v3.500H.6z" fill="#fff" />
          </Svg>
          form
        </li>
        <li className="flex h-[19px] items-center pl-[19px]">
          <Down />
          <span className="w-2" />
          <Svg stroke="#7eb0d0">
            <path d="M.6.6h14.800v14.800H.6z" fill="#e3ebf3" />
            <path d="M2.500 3h7v4h-7zM11 3h2.500v4H11zM2.500 9h11v4h-11z" fill="#fff" stroke="#c6c6c6" strokeWidth=".8" />
          </Svg>
          <span className="ml-1 flex h-[19px] items-center bg-[#429bfb] px-[2px] text-white">body</span>
        </li>
        <li className="flex h-[18px] items-center gap-1 pl-[55px]"><ChartItemIcon />chart0</li>
        <li className="flex h-[18px] items-center gap-1 pl-[55px]"><ChartItemIcon />chart1</li>
      </ul>
      <div className="flex h-6 shrink-0">
        {["属性", "事件", "移动端"].map((name) => (
          <button
            type="button"
            key={name}
            onClick={() => setTab(name)}
            className={`flex-1 ${tab === name ? "bg-[#f2f2f4]" : "bg-[#d9dade]"}`}
          >
            {name}
          </button>
        ))}
      </div>
      <form className="flex flex-col gap-[10px] py-[10px] pr-3 pl-[10px]">
        <Section title="基本" />
        <div className="flex h-5 items-center justify-between pl-1">
          <label htmlFor="widget-name">控件名称</label>
          <input id="widget-name" defaultValue="body" className={`${field} w-[146px] pl-[3px]`} />
        </div>
        <Section title="高级" />
        <div className="flex h-5 items-center justify-between pl-1">
          <label htmlFor="style">样式</label>
          <DotField id="style" value="标准" />
        </div>
        <div className="flex h-5 items-center justify-between pl-1">
          <label htmlFor="watermark">水印</label>
          <DotField id="watermark" value="" />
        </div>
        <Section title="坐标·尺寸" tall />
        <div className="flex h-10 items-start gap-[5px] pl-1">
          <span className="mr-auto flex h-5 items-center">控件大小</span>
          <Spinner label="宽度" value="585" />
          <Spinner label="高度" value="378" />
        </div>
        <Section title="组件区域缩放" />
        <div className="flex h-5 items-center justify-between pl-1">
          <label htmlFor="layout">布局方式</label>
          <Pick id="layout" width="w-[114px]" value="绝对布局" />
        </div>
        <div className="flex h-5 items-center justify-between pl-4">
          <label htmlFor="scale">缩放逻辑</label>
          <Pick id="scale" width="w-[102px]" value="固定大小" />
        </div>
      </form>
    </aside>
  );
}

export default function App() {
  return (
    <div className="flex h-screen w-full flex-col overflow-hidden border border-[#2a6590] bg-[#f5f5f7] font-[family-name:'Noto_Sans_CJK_SC',sans-serif] text-[12px] leading-4 text-black">
      <TitleBar />
      <MenuBar />
      <div className="flex min-h-0 flex-1">
        <FilePanel />
        <div className="flex w-[10px] shrink-0 flex-col items-center bg-[#e8e8e8] pt-2">
          <Left />
          <span className="my-auto">
            <Svg size={5} box={5} stroke="#999" strokeWidth="1"><path d="M1 0v5M4 0v5" /></Svg>
          </span>
        </div>
        <Center />
        <div className="flex w-10 shrink-0 flex-col items-center bg-[#e8e8e8] pt-2">
          <Right />
          <button type="button" aria-label="控件设置" className="mt-3 flex h-7 w-8 items-center justify-center bg-[#f5f5f7]">
            <svg width="16" height="12" viewBox="0 0 16 12" aria-hidden="true">
              <path d="M0 0h16v12H0z" fill="#429bfb" />
              <path d="M8 4h5l-2.500 4z" fill="#fff" />
            </svg>
          </button>
          <button type="button" aria-label="组件库" className="mt-[10px]">
            <Svg stroke="#5a5d66" strokeWidth="1.800">
              <path d="M1 2h6v4.500H1zM1 9.500h6V14H1zM10 2h5v12h-5z" />
            </Svg>
          </button>
        </div>
        <PropertyPanel />
      </div>
    </div>
  );
}
